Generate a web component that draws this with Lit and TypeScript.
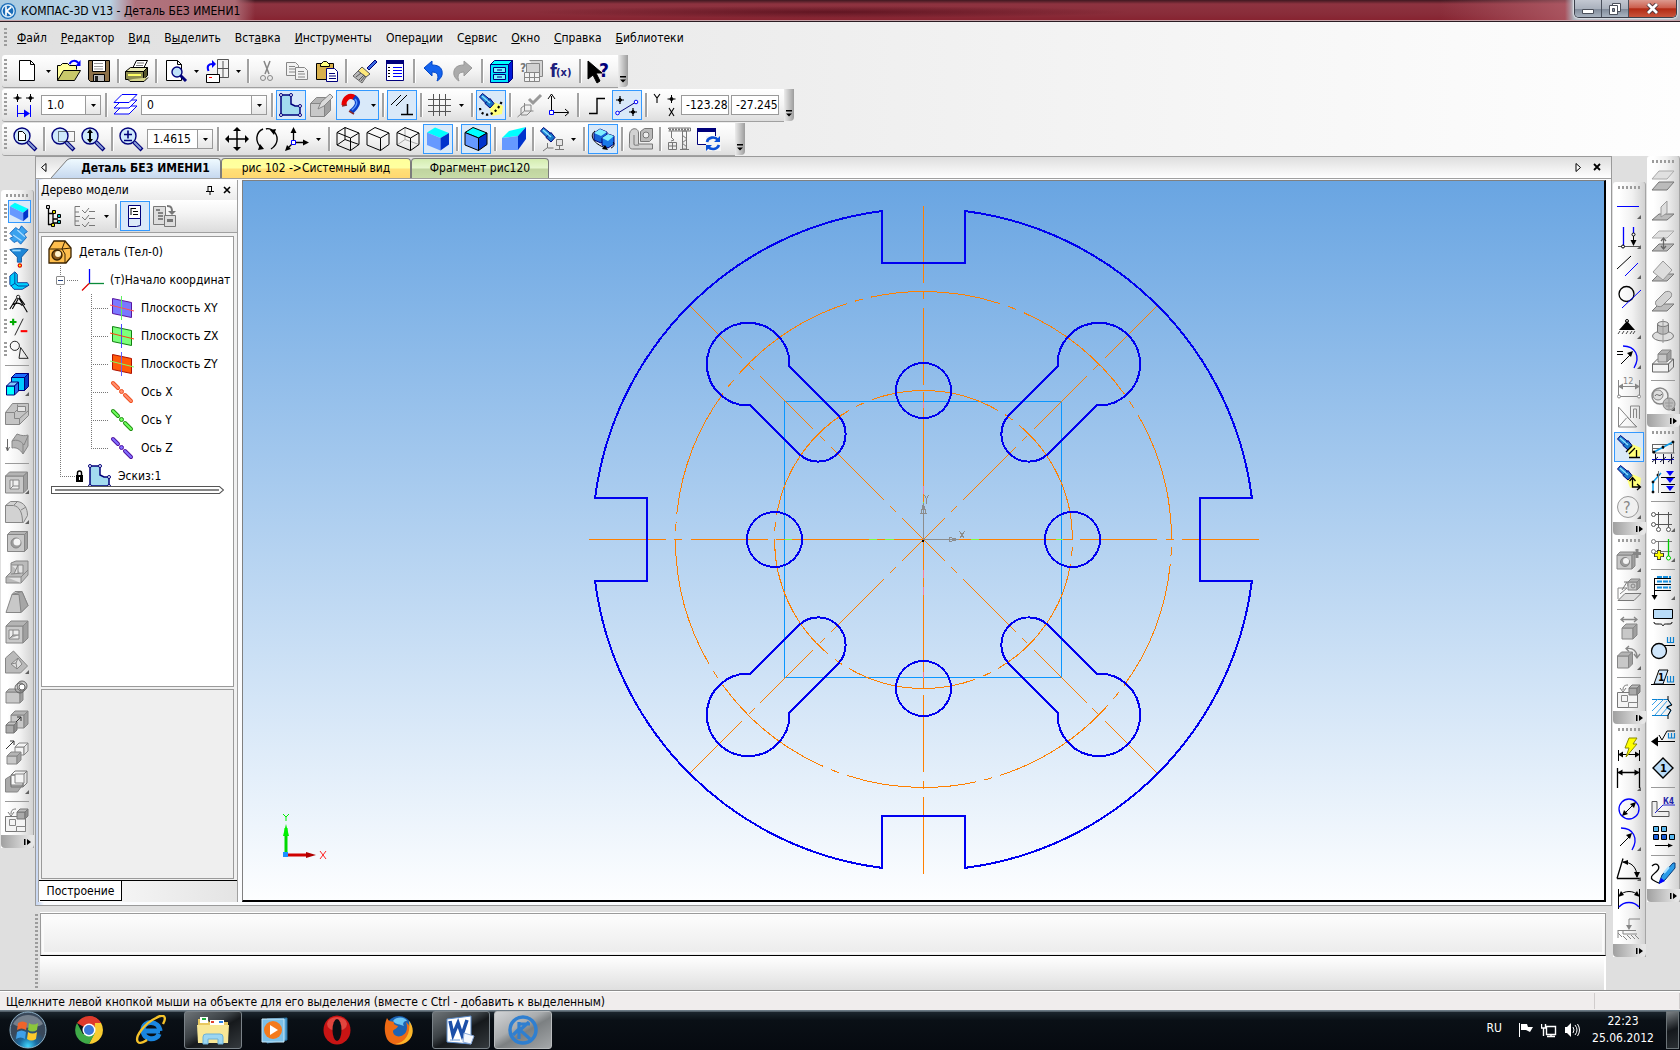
import { LitElement, html, css, svg, nothing } from "lit";
import { customElement } from "lit/decorators.js";
import { classMap } from "lit/directives/class-map.js";

/* ---------- drawing helpers ---------- */

const p = (d: string, stroke = "#000", fill = "none", w = 1) =>
  svg`<path d=${d} stroke=${stroke} fill=${fill} stroke-width=${w}></path>`;

const c = (x: number, y: number, r: number, stroke = "#000", fill = "none", w = 1) =>
  svg`<circle cx=${x} cy=${y} r=${r} stroke=${stroke} fill=${fill} stroke-width=${w}></circle>`;

const label = (x: number, y: number, s: string, color: string, size = 9, bold = false) =>
  svg`<text x=${x} y=${y} fill=${color} stroke="none" font-size=${size} font-weight=${bold ? 700 : 400}>${s}</text>`;

/** A box in oblique projection: front face w by h, depth d. */
const box = (x: number, y: number, w: number, h: number, d: number,
  front = "#c8c8c8", top = "#b4b4b4", side = "#a0a0a0", k = "#868686") => svg`
  ${p(`M${x} ${y + d}h${w}v${h}h${-w}z`, k, front)}
  ${p(`M${x} ${y + d}l${d} ${-d}h${w}l${-d} ${d}z`, k, top)}
  ${p(`M${x + w} ${y + d}l${d} ${-d}v${h}l${-d} ${d}z`, k, side)}`;

/** A cube turned towards the viewer, in a 24 px cell. */
const cubeOutline = (k = "#000") => p("M9 .5L23 6V17.500L14.500 23.500L1 18V5.500z", k);
const cubeFront = (k = "#000") => p("M1 5.500L14.500 11L23 6M14.500 11V23.500", k);
const cubeBack = (k = "#000") => p("M9 .5V12.500M1 18L9 12.500L23 17.500", k);
const cubeFaces = (k: string) => svg`
  ${p("M9 .5L23 6L14.500 11L1 5.500z", k, "#00ffff")}
  ${p("M1 5.500L14.500 11V23.500L1 18z", k, "#6699ff")}
  ${p("M23 6L14.500 11V23.500L23 17.500z", k, "#0033cc")}`;

const lens = (x = 9, y = 9) => svg`
  ${p(`M${x + 6} ${y + 6}l8 8`, "#00007b", "none", 4)}
  ${p(`M${x + 6} ${y + 6}l7 7`, "#8a9ed8", "none", 2)}
  ${c(x, y, 8, "#00007b", "#cfe9fb", 1.4)}`;

const torch = () => svg`
  ${p("M.5 4l3-3.500l8 6.500l-4 4z", "#00007b", "#1e8ad6")}
  ${p("M6 10.500l5-5l4 5l-4 4.500z", "#00007b", "#1677c8")}
  ${p("M3 3l8 7", "#8fe0ff", "none", 1.5)}`;
const beam = () => p("M10 14l5-5l9 4l-1 8l-10 2z", "none", "#ffff7a");

const cornerMark = () => p("M24 20v4h-4z", "none", "#606060");

const G = "#868686";
const L = "#d2d2d2";
const B = "#0000ff";
const N = "#00007b";

const icons: Record<string, unknown> = {
  /* file row */
  newFile: p("M4.500 1.500h11l4 4v16h-15z M15.500 1.500v4h4", "#000", "#fff"),
  open: svg`${p("M.5 21.500v-15h3l2-2h5l2 2h7v4", "#000", "#ffff9c")}
    ${p("M.5 21.500l6-10h17l-6 10z", "#000", "#c9c96a")}
    ${p("M12.500 5c2-4 6-4 9-1", B, "none", 2)}${p("M23.500 1v6h-5z", "none", B)}`,
  save: svg`${p("M1.500 1.500h21v21h-19l-2-2z", "#000", "#8c7048")}
    ${p("M5.500 1.500h13v11h-13z", "#000", "#fff")}${p("M7 4.500h9M7 7.500h9M7 10h9", "#999")}
    ${p("M6.500 15.500h11v7h-11z", "#000", "#c0c0c0")}${p("M8 17h3v5h-3z", "none", "#222")}`,
  print: svg`${p("M7.500 9.500l4-8h11l-4 8z", "#000", "#fff")}${p("M12 4h7M11 6.500h7", "#777")}
    ${p("M.5 12.500l5-4h17l-4 4z", "#000", "#e9e9b0")}${p("M.5 12.500h18v8h-18z", "#000", "#8d8d50")}
    ${p("M18.500 12.500l4-4v8l-4 4z", "#000", "#55552c")}${p("M3 20.500l2 2h14l4-4", "#000", "#d6d68e")}${p("M3 16h13", "#ffff66", "none", 2)}`,
  preview: svg`${p("M3.500 1.500h11l4 4v16h-15z M14.500 1.500v4h4", "#000", "#fff")}
    ${p("M17 16l6 6", N, "none", 3)}${c(14, 13, 5, N, "#bfe2f8", 1.4)}`,
  layout: svg`${p("M12.500.5h11v18h-11z", "#555", "#f4f4f4")}${p("M18 2v16M13 9.500h10", "#555", "none", 1)}
    ${p("M1.500 15.500h13v8h-13z", "#000", "#fff")}${p("M4 18.500h3", "#f00")}
    ${p("M3.500 12c-2-5 0-7 4-7", B, "none", 2)}${p("M7 1l4 4l-4 4z", "none", B)}`,
  cut: svg`${p("M9 2l5 13M15 2l-5 13", G, "none", 1.5)}${c(8, 19, 2.5, G)}${c(15, 19, 2.500, G)}`,
  copy: svg`${p("M1.500 3.500h9l3 3v10h-12z", G, "#f2f2f2")}${p("M4 7.500h6M4 10h7M4 13h6", G)}
    ${p("M10.500 8.500h9l3 3v9h-12z", G, "#f2f2f2")}${p("M13 12.500h6M13 15h7M13 18h7", G)}`,
  paste: svg`${p("M1.500 4.500h17v16h-17z", "#000", "#d8b04c")}${p("M5.500 5.500l3-3h3l3 3v2h-9z", "#000", "#ffff80")}
    ${p("M11.500 9.500h8l3 3v10h-11z", "#00007b", "#fff")}${p("M14 14.500h6M14 17h7M14 19.500h7", N)}`,
  brush: svg`${p("M14 9l8-8l2 2l-8 8z", N, "#3a6ae0")}${p("M9 8l8 7l-4 3l-8-6z", "#555", "#ffe97a")}
    ${p("M5 12l8 6l-4 6l-9-7z", "#666", "#b8b8b8")}${p("M3 18l5-4M6 21l5-5M8 22l4-5", "#555")}`,
  properties: svg`${p("M3.500 1.500h17v20h-17z", N, "#fff")}${p("M3 1h18v4h-18z", "none", N)}
    ${p("M10 8.500h9M10 11.500h9M10 14.500h9M10 17.500h9", B)}${p("M5 8.500h2M5 11.500h2M5 14.500h2M5 17.500h2", "#000")}`,
  undo: p("M3 9l8-7v4c8 0 11 4 10 10c-1 3-3 5-5 6c2-5 1-9-5-9v4z", "#0046c8", "#1463ee"),
  redo: p("M21 9l-8-7v4c-8 0-11 4-10 10c1 3 3 5 5 6c-2-5-1-9 5-9v4z", "#999", "#ababab"),
  manager: svg`${box(1.5, 1.5, 18, 18, 4, "#00e6ff", "#00ffff", "#0018d8", "#00007b")}
    ${p("M4.500 8.500h12v5h-12zM4.500 15.500h12v5h-12z", N, "#6ff6ff")}${p("M8 11h5M8 18h5", N)}`,
  variables: svg`${p("M10.500 1.500h13v16h-3", G, "#d5d5d5")}${p("M7.500 4.500h13v10h-13z", G, L)}
    ${p("M5.500 13.500h15v9h-15zM5.500 18.500h15M10.500 14v8M15.500 14v8", G, "#f2f2f2")}
    ${label(1, 13, "?", "#777", 12, true)}`,
  fx: svg`${label(1, 18, "f", "#20207c", 18, true)}${label(7, 17, "(x)", "#20207c", 11, true)}`,
  help: svg`${p("M1 2v18l5-4l4 8l3-2l-4-8h6z", "#000", "#000")}${label(12, 18, "?", N, 19, true)}`,

  /* current state row */
  step: svg`${p("M4.500 1v8M.5 5h8M17.500 1v8M13 5h8", "#000")}${c(4.5, 5, 1.500, "#000", "#000")}${c(17.500, 5, 1.5, "#000", "#000")}
    ${p("M4.500 12v12M17.500 12v12M5 20.500h10", B)}${p("M17 20.500l-6-4v8z", "none", B)}`,
  layers: svg`${["M1 21l8-8h15l-8 8z", "M1 15l8-8h15l-8 8z", "M1 9.500l8-8h15l-8 8z"].map(d => p(d, B, "#fff"))}`,
  sketch: svg`${p("M2 2h10v9l4 2h5v9h-19z", N, "#a3dbef", 1.5)}${c(2, 2, 1.500, N, "#fff")}${c(12, 2, 1.5, N, "#fff")}${c(21, 13, 1.500, N, "#fff")}${c(2, 22, 1.5, N, "#fff")}${c(21, 22, 1.5, N, "#fff")}`,
  sketch3d: svg`${box(1.5, 4.500, 14, 13, 6)}${p("M9 16l3-7l9-8l3 3l-9 9z", G, "#dcdcdc")}`,
  magnet: svg`${p("M4 12C4 5 10 1 15 5", "#e80000", "none", 5)}${p("M14 4c6 4 4 9-3 15", "#0a3ec8", "none", 5)}
    ${p("M15 6c3 3 2 7-3 11", "#5f9bff", "none", 1.500)}${p("M2 13l5-1M9 18l5 3", "#8a2a2a", "none", 1.500)}`,
  parallel: svg`${p("M1 12l10-10M6 13l11-11", "#000")}${p("M11 21.500h12M17.500 11v10", "#000", "none", 1.5)}`,
  grid: p("M0 6.500h23M0 12.500h23M0 18.500h23M5.500 1v22M11.500 1v22M17.500 1v22", "#555"),
  snapLight: svg`${beam()}${torch()}<path d="M1 15c1 9 14 11 22-7" fill="none" stroke="#000" stroke-width="2.200" stroke-dasharray="2.200 2.600"></path>`,
  snapGray: svg`${p("M7.500 10v8M7.500 18h9M7.500 18l-7 6M4 15l4-3l6 0v6l-4 4h-6z", G)}${p("M12 6l4 4l8-8", "#999", "none", 3)}`,
  localAxes: svg`${p("M4.500 3v14M7 19.500h14", "#000")}${p("M1 6l3.5-5l3.500 5M18 16l4 3.500l-4 3.500", "#000")}${p("M2.500 17.500h4v4h-4z", B, "#fff")}`,
  ortho: p("M4 20.500h8v-15h8", "#000", "none", 1.400),
  points: svg`${p("M3 20L21 9", N)}${c(2.5, 20, 1.8, B, "#fff")}${c(21, 9, 1.800, B, "#fff")}
    ${p("M5 3v8M1 7h8M18 15v8M14 19h8", "#000", "none", 1.2)}${c(5, 7, 1.5, "#000", "#000")}${c(18, 19, 1.500, "#000", "#000")}`,
  coordinates: svg`${p("M1 1l3 4l3-4M4 5v5M16 15l5 8M21 15l-5 8", "#000", "none", 1.1)}${p("M18.500 2v8M14.500 6h8", "#000")}${c(18.5, 6, 1.5, "#000", "#000")}`,

  /* view row */
  zoomSheet: svg`${lens()}${p("M5.500 4.500h4l3 3v6h-7z", "#000", "#fff")}`,
  zoomWindow: svg`${lens()}<rect x="7.500" y="4.500" width="16" height="10" fill="none" stroke="#000" stroke-dasharray="1 1"></rect>`,
  zoomDrag: svg`${lens()}${p("M9 4v10", "#000", "none", 2)}${p("M6 6l3-4l3 4zM6 12l3 4l3-4z", "none", "#000")}`,
  zoomScale: svg`${lens()}${p("M5 7.500h8M9 3.500v8M5 13.500h8", N, "none", 1.6)}`,
  pan: svg`${p("M12 3v18M3 12h18", "#000", "none", 1.500)}${p("M12 0l4 4h-8zM12 24l4-4h-8zM0 12l4-4v8zM24 12l-4-4v8z", "none", "#000")}`,
  orbit: svg`${p("M7 21C-1 15 1 5 8 2M17 3c7 5 7 14-1 19M11 2c2-1 4 0 6 1", "#000", "none", 1.4)}${p("M5 17l4 5l-6 1zM19 8l-4-5l6-1z", "none", "#000")}`,
  orient: svg`${p("M8.500 5v10M9 15.500h10M8 16l-6 6", "#000", "none", 1.300)}${p("M8.500 0l3 6h-6zM24 15.500l-6-3v6zM0 24l2-6l4 4z", "none", "#000")}${p("M6.500 13.500h4v4h-4z", B, "#fff")}`,
  wire: svg`${cubeBack()}${cubeOutline()}${cubeFront()}`,
  hidden: svg`${cubeOutline()}${cubeFront()}`,
  thinHidden: svg`${cubeBack("#a8a8a8")}${cubeOutline()}${cubeFront()}`,
  shaded: cubeFaces("none"),
  shadedEdges: cubeFaces("#000"),
  perspective: svg`${p("M0 11l7-7l17-4l-8 9z", "none", "#00ffff")}${p("M0 11l16-2v14h-16z", "none", "#6699ff")}${p("M16 9l8-9v12l-8 11z", "none", "#0033cc")}`,
  section: svg`${torch()}${p("M7.500 16v5h6M7 21l-4 3", "#777")}${p("M16.500 12.500h6v6h-6zM19.500 18v4M15 22.500h9", "#777", "#e4e4e4")}`,
  rotateModel: svg`${p("M3 6l6-4l7 3v7l-6 4l-7-3z", N, "#1464d8")}${p("M3 6l7 3l6-4l-7-3z", "none", "#7fefff")}
    ${p("M11 11l6-4l6 2v8l-6 4l-6-3z", N, "#1878e8")}${p("M11 11l6 3l6-5l-6-2z", "none", "#7fefff")}
    ${p("M4 4c-6 4-2 13 11 17M20 21c3-1 4-4 2-6", "#000")}${p("M17 23l-6-1l3-4z", "none", "#000")}`,
  simplify: svg`${p("M.5 8c0-8 9-8 9-2v11h14v5h-20c-4 0-3-4-3-6z", "#777", L)}${p("M5 8v9c0 2 2 1 5 1", "#777")}
    ${p("M11.500 4.500l4-3h8v10l-3 3h-9z", "#777", "#bbb")}${c(17, 8, 3, "#777", "#eee")}`,
  crane: svg`${p("M1.500 2v-1h22v3h-22M4.500 4v6M4 10l3 3l-3 1", "#777")}${p("M15.500 4h4v18h-4zM15 8l5 4l-5 4l5 4M13 22.500h9", "#777")}${p("M1.500 15.500h8v7h-8zM5.500 15v8M2 19h8", "#777", "#eee")}
    <path d="M2 2.500h20" stroke="#777" stroke-width="2" stroke-dasharray="2 1"></path>`,
  refresh: svg`${p("M.5 1.500h18v16h-18z", N, "#fff")}${p("M0 1h19v4h-19z", "none", N)}${p("M9 9h15v15h-15z", "none", "#f4f4f4")}
    ${p("M10 15c1-5 8-6 11-2M22 18c-2 5-8 5-11 2", "#0a4fd8", "none", 2.600)}${p("M23 9v6h-6zM9 24v-6h6z", "none", "#0a4fd8")}`,

  /* model tree */
  treeStruct: svg`${p("M5.500 4v17M5 9.500h6M5 20.500h6M10 10v5h5M10 15v4h5", "#000", "none", 1.3)}
    ${p("M3.500 1.500h3v3h-3z", "#000", "#ccc")}${p("M9.500 6.500h3v3h-3zM8.500 19.500h3v3h-3z", "#000", "#dd0")}${p("M14.500 10.500h3v3h-3zM14.500 16.500h3v3h-3z", "#000", "#0bb")}`,
  treeList: svg`${p("M7 2.500h-5v19h5M2 12.500h5M2 8h4M2 17h4", "#777")}${p("M9 6l3 3l4-5M9 13l3 3l4-5M9 20l3 3l4-5", "#777")}${p("M16 7.500h6M16 14.500h6M16 21.500h6", "#777")}`,
  treeSplit: svg`${p("M5.500 1.500h12v13h-12z", N, "#fff")}${p("M5.500 14.500h12v7l-4 1h-8z", N, "#dceaf8")}${p("M8 4.500h5M10 7.500h5M10 10.500h5M8 4v7", "#000")}`,
  treeRel: svg`${p("M.5 2.500h12v18h-12z", "#777", "#ddd")}${p("M3 6h4M5 9h5M5 12h5M5 15h5", "#666", "none", 1.500)}${p("M11.500 11.500h11v11h-11z", "#777", "#ddd")}${p("M14 15h6v3h-6z", "none", "#777")}${p("M14 2c5 0 5 3 5 6", "#777", "none", 2)}${p("M15 7h8l-4 4z", "none", "#777")}`,
  part: svg`${p("M1 9l5-8h11l6 7v9l-5 6h-17z", "#3a2200", "#ffbe4d", 1.3)}${p("M1 9h13l3 5v9", "#3a2200")}${p("M14 9l9-1M14 9l3-8", "#3a2200")}
    ${c(9, 15, 5, "#3a2200", "#8a5a1e", 1.3)}${c(10, 14, 3, "none", "#fff2cc")}`,
  csys: svg`${p("M8.500 1v14", B, "none", 1.300)}${p("M8 15.500h15", "#0a8a3a", "none", 1.3)}${p("M8 15.500l-7 7", "#e00000", "none", 1.3)}`,

  /* left compact panel */
  solid: svg`${p("M1 5l6-4l16 7l-6 5z", "none", "#00ffff")}${p("M1 5l16 8v10l-16-8z", "none", "#6699ff")}${p("M17 13l6-5v10l-6 5z", "none", "#0033cc")}`,
  surface: svg`${p("M1 10l7-7l4 3l3-5l7 7l-4 3l3 4l-7 8l-4-4l-4 2l-5-5l4-2z", "#0a5db8", "#3aa2ee")}${p("M5 12l10 7M10 6l9 8", "#a8dcff", "none", 1.500)}`,
  filter: svg`${p("M1 2c6-2 16-2 22 0l-8 9v6l-5 0v-6z", "#0a4f98", "#1d86d6")}${p("M4 3h10", "#9fdcff", "none", 2)}${c(13, 21, 2, "#e00000", "#ff0", 1.4)}`,
  sheet: svg`${p("M1 6l6-5l3 3v10l12 0l2 3l-8 5h-10l-5-6z", "#002a8a", "#00cfff")}${p("M7 2v13l4 3h11M7 15l-5 3", "#002a8a")}`,
  compass: svg`${c(11, 3.500, 2, "#000")}${p("M9 5l-8 13M12 5l10 17M11 6l-7 12M13 5l6 8M4 13c5-3 9-3 12 1", "#000", "none", 1.300)}`,
  plusMinus: svg`${p("M1 6h8M5 2v8", "#0a0", "none", 2.500)}${p("M17 2l-10 20", "#000")}${p("M14 17h8", "#f00", "none", 2.500)}`,
  shapes: svg`${c(7, 7, 5.500, "#000")}${p("M14 9l9 13h-11z", "#000")}`,
  extrude: svg`${box(6.5, 1.500, 13, 13, 4, "#00c8ff", "#1a6dff", "#0038c8", "#00007b")}${box(1.500, 10, 8, 9, 4, "#00ffff", "#7dc7ff", "#2a6df0", "#00007b")}${cornerMark()}`,
  gExtrude: svg`${p("M.5 22.500v-12l7-9h16v12l-9 9z", G, "#c4c4c4")}${p("M.5 10.500h9v6h5l9-8M9.500 10.500l3-3v-5M14.500 22.500v-6", G, "none")}${p("M12.500 4.500h8v5h-8z", G, "#e4e4e4")}`,
  gRotate: svg`${p("M2.500 7v11M1 15l1.500 4l2-4", "#666")}${p("M7 9l5-7c5 2 8 2 11 1v11l-5 8c-3-5-7-7-11-6z", G, "#b4b4b4")}${p("M7 9c5-2 9 0 12 4l4-9M18 12v9", G)}`,
  gShell: svg`${box(.5, 2, 18, 17, 4)}${p("M5 10h9v9h-9z", G, "#f0f0f0")}${p("M5 19l3-3h6M8 16v-6", G)}${cornerMark()}`,
  gFillet: svg`${p("M.5 22.500v-17l5-4h7c7 1 10 7 10 14l-4 7z", G, L)}${p("M.5 5.500h8c6 1 9 7 9 17M9 5l4-4M16 10l5-3", G)}${cornerMark()}`,
  gHole: svg`${box(2.500, 1.500, 17, 17, 3)}${c(11, 13, 5, G, "#9c9c9c")}${c(12, 12, 3.500, "none", "#f4f4f4")}`,
  gRib: svg`${p("M1 23v-6l5-5v-9l5-2h12v14l-7 8z", G, "#bbb")}${p("M6 5h12v10M1 17h15v6M16 17l7-7M6 14l12-1M9 14l4-9v9", G, "#e2e2e2")}`,
  gDraft: svg`${p("M1 22.500l6-18l3-3h7l6 14l-7 7z", G, "#c8c8c8")}${p("M7 4.500h7l2 18l7-7l-6-14z", G, "#a6a6a6")}`,
  gBox: svg`${box(1, 1, 17, 17, 5)}${p("M4 10h10v9h-10z", G, "#eee")}${p("M4 19l4-4h6M8 10v5", G, "#aaa")}`,
  gCutPlane: svg`${p("M.5 8l8-7l14 15l-7 7h-15z", G, "#bababa")}${p("M6 14l7-6l4 6l-5 5zM6 14l5-1l1 6M11 13l2-5", G, "#e0e0e0")}${cornerMark()}`,
  gPatch: svg`${box(1, 9, 14, 11, 3)}${c(17, 6, 5, "#666", "#ccc")}${c(15, 8, 5, "#666", "none")}${c(17, 7, 3, "#666", "#fff")}`,
  gMirror: svg`${box(6, 1, 13, 13, 4)}${box(1, 12, 8, 8, 3, "#aaa", "#c4c4c4", "#8f8f8f", "#777")}${p("M11 12l5-5M12 7h4v4", "#333")}`,
  gMove: svg`${p("M1 9l8-8M5 1h4v4", "#333")}${box(10, 3, 9, 8, 4, "#f4f4f4", "#f4f4f4", "#e6e6e6")}${box(2, 12, 10, 8, 4)}`,
  gArray: svg`${p("M.5 9l5-3v9h12l-5 7h-12z", G, "#aaa")}${box(6, 1, 12, 12, 4, "none", "none", "none", "#777")}${p("M10 4h9v9h-9z", G, "#f4f4f4")}${cornerMark()}`,
  gSheet: svg`${p("M.5 8.500h20v15h-20z", "#777", "#f4f4f4")}${p("M4.500 11.500h6v6h-6zM11.500 18.500h9v5h-9z", G)}${p("M11 1c-4 0-5 2-5 5M3 4l3 4l3-4", "#777")}${box(12, 1, 8, 7, 3, "#aaa", "#bbb", "#8f8f8f", "#777")}`,

  /* parametrization column */
  hLine: svg`${p("M0 11.500h22", B)}${cornerMark()}`,
  vPair: svg`${p("M6.500 2v20M16.500 2v8", B, "none", 1.300)}${p("M1 21.500h22", "#555")}${c(6, 21.500, 1.5, "#000", "#fff")}${c(16.500, 9.500, 1.5, "#000", "#fff")}${p("M16.500 11v8", "#000")}${p("M16.500 21l-3-6h6z", "none", "#000")}${cornerMark()}`,
  twoLines: svg`${p("M0 14l14-13", "#000")}${p("M8 21l13-13", B)}${cornerMark()}`,
  tangent: svg`${c(9.5, 9, 7.500, "#000", "none", 1.300)}${p("M5 23l19-18", B)}`,
  fixed: svg`${c(10, 6, 1.500)}${p("M10 6l8 9h-16z", "none", "#000")}${p("M3 16l-2 3M7 16l-2 3M11 16l-2 3M15 16l-2 3M18 16l-2 3", "#444")}${cornerMark()}`,
  equalR: svg`${p("M0 6.500h6M0 9.500h6", "#000")}${p("M6 1c12 0 18 10 11 22", B, "none", 1.300)}${p("M4 19l10-10", "#000")}${p("M16 6l-2 6l-4-4z", "none", "#000")}${cornerMark()}`,
  dim12: svg`${label(6, 9, "12", G, 9)}${p("M1.500 5v16M22.500 5v16M2 11.500h20M3 21.500h18", G)}${p("M1 11.500l5-3v6zM23 11.500l-5-3v6z", "none", G)}${c(2, 21.500, 1.5, G, "#fff")}${c(22, 21.500, 1.5, G, "#fff")}`,
  mirrorG: svg`${p("M1.500 2v20h18zM1.500 22l8-9M10 12l10 10", G)}${p("M13.500 13v-12h9v13M16.500 13v-9h3v9", G)}`,
  lightPar: svg`${beam()}${torch()}${p("M9 17l6-6M12 19l6-6M12 22.500h11M19.500 15v7", "#000", "none", 1.300)}`,
  lightAxes: svg`${beam()}${torch()}${p("M15.500 13v9h7M12.500 16l3-3.500l3 3.500M20 19l3.500 3l-3.500 3", "#000", "none", 1.300)}`,
  askG: svg`${c(11, 12, 10.500, "#999", "#f0f0f0")}${label(6, 18, "?", "#888", 16)}${cornerMark()}`,
  gHolePlus: svg`${box(0, 4, 15, 14, 3)}${c(8, 14, 4.500, G, "#9c9c9c")}${c(9, 13, 3, "none", "#f4f4f4")}${p("M20 1v9M16 5.500h8", G, "none", 3)}${cornerMark()}`,
  gProject: svg`${p("M1 22.500l7-7h16l-7 7z", "#777", "#ddd")}${p("M1 21v-11h9l-7 6", G)}${p("M5 12l5-8M7 4h4v4", "#777")}${box(11, 1, 9, 8, 3)}${c(16, 8, 2, G)}`,
  gWidth: svg`${box(5, 8, 11, 11, 4)}${p("M4 3.500h16M7 1l-3 2.500l3 2.500M17 1l3 2.500l-3 2.500", G, "none", 1.300)}`,
  gTurn: svg`${box(.5, 6, 11, 12, 4)}${p("M10 2.500c6-1 10 3 10 8M12 0l-3 2.500l3 3M17 8l3 4l3-4", G, "none", 1.300)}${cornerMark()}`,

  /* dimensions column */
  autoDim: svg`${p("M1.500 13v11M22.500 13v11M2 17.500h20", "#000")}${p("M1 17.500l5-3v6zM23 17.500l-5-3v6z", "none", "#000")}${p("M12 1h8l-4 6h4l-11 13l3-9h-4z", "#8a8a00", "#ff0")}`,
  linDim: svg`${p("M.5 1v20M22.500 1v20M1 5.500h21", "#000", "none", 1.300)}${p("M.5 5.500l5-3v6zM22.500 5.500l-5-3v6z", "none", "#000")}${cornerMark()}`,
  diaDim: svg`${c(12, 12, 10, B, "none", 1.300)}${p("M6 18l12-12", "#000")}${p("M19 5l-2 6l-4-4zM5 19l2-6l4 4z", "none", "#000")}`,
  radDim: svg`${p("M4 1c12 0 18 10 11 22", B, "none", 1.300)}${p("M3 19l10-10", "#000")}${p("M15 6l-2 6l-4-4z", "none", "#000")}${cornerMark()}`,
  angDim: svg`${p("M0 21.500h23M0 21.500l6-20", "#000", "none", 1.300)}${p("M6 5c8 0 14 5 14 15", "#000")}${p("M5 5l6-2v5zM20 21l-3-6h6z", "none", "#000")}${cornerMark()}`,
  arcDim: svg`${p("M1.500 2v20M22.500 2v20", "#000")}${p("M2 9c5-6 15-6 20 0", "#000")}${p("M1 10l3-6l3 4zM23 10l-3-6l-3 4z", "none", "#000")}${p("M2 20c5-6 15-6 20 0", B, "none", 1.300)}`,
  baseG: svg`${p("M1 13.500h18M1 13v8M6 13v4h14M12 10v-8h11M1 16l4 4M6 19l4 4M10 18l4 4M14 18l4 4M18 18l4 4", G)}${p("M12 13l-3-5h6z", "none", G)}`,

  /* auxiliary geometry column */
  planeOffset: svg`${p("M1 10l7-8h15l-7 8z", "#aaa", "#e0e0e0")}${p("M1 21l7-8h15l-7 8z", "#777", "#bbb")}`,
  planeAxis: svg`${p("M1 21l7-6h15l-7 6z", "#777", "#bbb")}${p("M10 18v-10l6-6v12z", "#999", "#ddd")}`,
  planeMove: svg`${p("M1 9l7-7h15l-7 7z", "#aaa", "#e0e0e0")}${p("M1 22l7-7h15l-7 7z", "#777", "#bbb")}${p("M12.500 9v10M10 12l2.500-3l2.500 3M10 17l2.500 3l2.500-3", "#666", "none", 1.300)}`,
  planeTilt: svg`${p("M1 22l7-7h15l-7 7z", "#777", "#bbb")}${p("M2 13l10-11l9 9l-9 10z", "#999", "#ddd")}`,
  planeCyl: svg`${p("M1 22l7-7h15l-7 7z", "#777", "#bbb")}${p("M5 12l9-9c5-2 8 1 6 5l-9 9c-4 2-8-1-6-5z", "#888", L)}`,
  planeRound: svg`<ellipse cx="12" cy="17" rx="10.500" ry="5" fill="#ddd" stroke="#777"></ellipse><path d="M6.500 5v8c2 3 9 3 11 0v-8" fill="#bbb" stroke="#777"></path><ellipse cx="12" cy="5" rx="5.500" ry="2.500" fill="#ddd" stroke="#777"></ellipse>${p("M12 0v24", "#999")}`,
  planeBox: svg`${box(1.500, 10, 16, 8, 5, "#f4f4f4", "#eee", "#ddd", "#666")}${box(7, 1, 9, 8, 4)}`,
  spheres: svg`${c(9, 9, 8, G, "#eee", 1.400)}${c(7, 8, 5, G, "#ddd")}${p("M4 9c2-4 4 2 7-2", "#666")}${c(18, 17, 6, G, "#bbb")}${p("M14 16h8M15 19h6M18 12v10", "#999")}${cornerMark()}`,
  gauge1: svg`${p("M1.500 4v9h22M1 4.500h20M1 8.500h12M22.500 2v11", "#666")}${p("M3 12L22 2", "#0a9ae8", "none", 1.500)}${c(3, 12, 1, "#000", "#000")}${c(12, 7, 1, "#000", "#000")}${c(22, 2, 1, "#000", "#000")}${p("M1 19.500h22", "#00c")}${p("M1 22l6-5M9 22l6-5M17 22l6-5M4.500 14v10M12.500 14v10M20.500 14v10", "#113", "none", 1)}`,
  gauge2: svg`${p("M2 22v-10l8-9", "#0a9ae8", "none", 1.500)}${c(2, 22, 1, "#000", "#000")}${c(2, 12, 1, "#000", "#000")}${c(7, 5, 1, "#000", "#000")}${p("M7.500 1v22", "#777")}${[1, 8, 16].map(y => svg`${p(`M15 ${y}h8l-4 5z`, "none", B)}${p(`M10 ${y + 6.5}h14`, "#000")}`)}`,
  bolts: svg`${p("M7.500 4v16M17.500 4v16M4 6.500h17M4 16.500h17", "#555")}${c(2.500, 6.500, 2, "#555", "#fff")}${c(2.500, 16.500, 2, "#555", "#fff")}${c(7.500, 21.500, 2, "#555", "#fff")}${c(17.500, 21.500, 2, "#555", "#fff")}${cornerMark()}`,
  boltsAdd: svg`${p("M7.500 3v16M4 3.500h17M4 13.500h17", "#777")}${p("M17.500 1v17", "#0c0", "none", 1.300)}${c(2.500, 3.500, 2, "#777", "#fff")}${c(2.500, 13.500, 2, "#777", "#fff")}${c(17.500, 20, 2, "#0c0", "#fff")}${p("M8 12v10M3 17h10", "#333", "none", 4)}${p("M8 13v8M4 17h8", "#ff0", "none", 2.500)}${cornerMark()}`,
  leaderText: svg`${p("M3.500 2v18M3 2.500h17M3 8.500h17M3 14.500h17", "#000")}${p("M3.500 24l-3-5h6z", "none", "#000")}
    <path d="M6 1h14M6 5.500h14M6 11.500h14" fill="none" stroke="#1390e0" stroke-width="2" stroke-dasharray="5 1"></path>${cornerMark()}`,
  brace: svg`${p("M2.500 3.500h19v9h-19z", "#000", "#b9dcf8")}${p("M3 16c0 2 1 2 4 2c4 0 4 0 5 2c1-2 1-2 5-2c3 0 4 0 4-2", "#000")}`,
  balloon: svg`${c(8, 15, 7.500, "#000", "#cfe6fb", 1.300)}${p("M13 9.500h11", "#000")}${p("M16.500 1v5.500h3M19.500 1v5.500h3v-5.500", "#0a80d0", "none", 1.200)}`,
  brand: svg`${p("M3 18l5-14h9l-5 14z", "#000", "#cfe6fb")}${label(7, 15, "1", "#000", 10, true)}${p("M0 18.500h24", "#000")}${p("M16.500 10v6h3M19.500 10v6h3v-6", "#0a80d0", "none", 1.200)}`,
  breakLine: svg`${p("M1 3.500h16l3 5l-5 3l5 3l-3 5h-16", "#0a80d0")}${p("M1 9l6-6M1 15l12-12M4 19l12-14M10 19l7-8", "#3aa0e8")}${p("M17 0v4l4 5l-5 2l4 3l-3 5v4", "#000")}`,
  rough: svg`${p("M6 15.500h18M8 9l3 5l5-9h8", "#000")}${p("M0 15.500l7-5v10z", "none", "#000")}${p("M17.500 7v5h3M20.500 7v5h3v-5", "#0a80d0", "none", 1.200)}`,
  datum: svg`${p("M12 2l10 10l-10 10l-10-10z", "#000", "#b9dcf8", 1.400)}${label(9, 16, "1", "#000", 11, true)}`,
  k4: svg`${p("M1 7.500h5v8c0 2 1 2 3 2h9v5h-17z", "#555", "#eee")}${p("M4 19l8-8h12", "#22c")}${label(12, 10, "К4", "#22a", 8, true)}`,
  squares: svg`${p("M2.500 2.500h5v5h-5zM10.500 2.500h5v5h-5z", "#000", "#58b8f0")}${p("M2.500 10.500h5v5h-5zM10.500 10.500h5v5h-5z", "#000", "#1a5cd8")}${p("M18.500 10.500h5v5h-5z", "#000", "#58b8f0")}${p("M4 21.500h16", "#000")}${p("M22 21.500l-5-2v4z", "none", "#000")}`,
  pencil: svg`${p("M1 4c5-5 9 1 5 5c-4 4-8 6-4 9c3 2 5 3 7 3", "#000", "none", 1.300)}${p("M8 21l3-8l11-12h2v5l-10 12z", "#053a7a", "#2a9be8")}${p("M8 22l2-6l4 3z", "none", "#00f")}${p("M13 11l5-6", "#a8e0ff", "none", 2)}`,
};

const glyph = (name: string, size = 24) =>
  html`<svg class="glyph" width=${size} height=${size} viewBox="0 0 24 24" aria-hidden="true">${icons[name]}</svg>`;

const caret = html`<svg class="caret" width="5" height="3" viewBox="0 0 5 3" aria-hidden="true"><path d="M0 0h5l-2.500 3z"></path></svg>`;
const overflowH = html`<button class="overflow" aria-label="Параметры панели"><svg width="6" height="8" viewBox="0 0 6 8"><path d="M0 0h6v1.500h-6zM0 3.500h6l-3 3z"></path></svg></button>`;
const overflowV = html`<button class="overflow-v" aria-label="Параметры панели"><svg width="7" height="6" viewBox="0 0 7 6"><path d="M0 0h1.500v6h-1.500zM3 0l4 3l-4 3z"></path></svg></button>`;

/* ---------- the part outline ---------- */

const cos45 = Math.SQRT1_2;
const R = 331;
const SLOT = 41.3;
const EDGE = Math.sqrt(R * R - SLOT * SLOT);
const DEPTH = 276.5;

const outline = (() => {
  const a = EDGE, s = SLOT, d = DEPTH;
  const arc = (x: number, y: number) => `A${R} ${R} 0 0 1 ${x} ${y}`;
  return `M${s} ${-a}${arc(a, -s)}H${d}V${s}H${a}${arc(s, a)}V${d}H${-s}V${a}${arc(-a, s)}H${-d}V${-s}H${-a}${arc(-s, -a)}V${-d}H${s}Z`;
})();

const keyhole = "M217.200 -27.500L149 -27.500A27.500 27.500 0 0 0 149 27.500L217.200 27.500A41.300 41.300 0 1 0 217.200 -27.500Z";
const HALF = R * cos45;

const drawing = html`
  <svg class="drawing" viewBox="243 181 1361 719" preserveAspectRatio="xMidYMid meet" role="img" aria-label="Эскиз детали">
    <g transform="translate(923.5 539.5)" fill="none" shape-rendering="crispEdges">
      <g stroke="#0a96ff"><path d="M-139 -138H138V138H-139Z"></path></g>
      <g stroke="#ff8000" stroke-width="1">
        <circle r="248" stroke-dasharray="0 8 9 8 130.800 0"></circle>
        <circle r="149" stroke-dasharray="0 8 9 8 131 0"></circle>
        ${[[-1, -1], [1, -1], [-1, 1], [1, 1]].map(([x, y]) => svg`<path stroke-dasharray="75 9 8 8" d=${`M${x * HALF} ${y * HALF}L0 0`}></path>`)}
        <path stroke-dasharray="77 8 8 9 77 9 8 9" d="M0 -334V-140M0 334V140M-335 0H-140M335 0H140"></path>
        <path d="M0 -148V148M-148 0H148"></path>
      </g>
      <path stroke="#80ff40" d="M-139 0h7M-55 0h8M-39 0h9M47 0h8M132 0h7M0 -38v3"></path>
      <path stroke="#ff8090" d="M0 -138v6M0 -54v8M0 30v8M0 47v8M0 132v6"></path>
      <g stroke="#0000f0" stroke-width="2">
        <path d=${outline}></path>
        ${[45, 135, 225, 315].map(a => svg`<path d=${keyhole} transform=${`rotate(${a})`}></path>`)}
        ${[[149, 0], [-149, 0], [0, 149], [0, -149]].map(([x, y]) => svg`<circle cx=${x} cy=${y} r="27.500"></circle>`)}
      </g>
      <g stroke="#8c8c8c" fill="none">
        <path d="M0 0V-35M0 0H34M-2.500 -26l2.500 -10l2.500 10zM26 -2v4l9 -2z"></path>
        <path d="M1 -44l2 3l2 -3M3 -41v5M36 -8l5 7M41 -8l-5 7"></path>
      </g>
      <rect x="-2" y="0" width="2" height="2" fill="#000"></rect>
    </g>
    <g>
      <path d="M286 855V828" stroke="#00d800" stroke-width="3"></path><path d="M286 824l3 12h-6z" fill="#00f000"></path>
      <path d="M286 855H308" stroke="#d00000" stroke-width="3"></path><path d="M316 855l-10 -3v6z" fill="#b00000"></path>
      <rect x="283" y="852" width="5" height="5" fill="#1e90ff"></rect>
      <path d="M283 814l3 3l3 -3M286 817v4" stroke="#00f000" fill="none"></path>
      <path d="M320 851l6 8M326 851l-6 8" stroke="#ff2020" fill="none"></path>
    </g>
  </svg>`;

/* ---------- data ---------- */

const menus: [string, string, string][] = [
  ["", "Ф", "айл"], ["", "Р", "едактор"], ["", "В", "ид"], ["В", "ы", "делить"], ["Вст", "а", "вка"],
  ["", "И", "нструменты"], ["Опера", "ц", "ии"], ["С", "е", "рвис"], ["", "О", "кно"], ["", "С", "правка"], ["", "Б", "иблиотеки"],
];

/* "|" is a separator, "v" a drop-down arrow, "*" marks a pressed button. */
const fileRow = "newFile v open save | print | preview v layout v | cut copy paste | brush properties | undo redo | manager variables fx | help";
const stateRowB = "| *sketch sketch3d *magnet> | *parallel | grid v | *snapLight | snapGray localAxes | ortho *points | coordinates";
const viewRowA = "zoomSheet | zoomWindow zoomDrag | zoomScale";
const viewRowB = "| pan orbit orient v | wire hidden thinHidden *shaded | *shadedEdges | perspective | section v | *rotateModel | simplify | crane refresh";

const modes = "*solid surface filter sheet compass plusMinus shapes";
const leftTools = "| extrude gExtrude gRotate | gShell gFillet gHole gRib gDraft gBox gCutPlane gPatch gMirror gMove gArray | gSheet";
const colA = [
  "hLine vPair twoLines tangent fixed equalR dim12 mirrorG *lightPar lightAxes askG",
  "gHolePlus gProject | gWidth gTurn | gSheet",
  "autoDim linDim diaDim radDim angDim arcDim baseG",
];
const colB = [
  "planeOffset planeAxis planeMove planeTilt planeCyl planeRound planeBox | spheres",
  "gauge1 gauge2 | bolts boltsAdd | leaderText brace balloon brand breakLine rough datum | k4 squares | pencil",
];

const plane = (fill: string, edge: string, v: string, h: string) => html`
  <svg class="glyph" width="24" height="24" viewBox="0 0 24 24" aria-hidden="true">
    <path d="M2.500 2.500l19 4v15l-19-4z" fill=${fill} stroke=${edge}></path>
    <path d="M11.500 0v24" stroke=${v}></path><path d="M0 9l24 6" stroke=${h}></path></svg>`;
const axis = (fill: string, edge: string) => html`
  <svg class="glyph" width="24" height="24" viewBox="0 0 24 24" aria-hidden="true">
    <path d="M3 3l5 5M15 15l6 6" stroke=${edge} stroke-width="4" stroke-linecap="round"></path>
    <path d="M3 3l5 5M15 15l6 6" stroke=${fill} stroke-width="2" stroke-linecap="round"></path>
    <circle cx="11.500" cy="11.500" r="2" fill=${fill} stroke=${edge}></circle></svg>`;

const origin: [string, unknown][] = [
  ["Плоскость XY", plane("#7a78ff", "#5a14a0", "#60f060", "#ff5050")],
  ["Плоскость ZX", plane("#7cff7c", "#108010", "#4848ff", "#ff4010")],
  ["Плоскость ZY", plane("#ff5a0a", "#b01000", "#6060ff", "#80ff60")],
  ["Ось X", axis("#ff9070", "#f05020")],
  ["Ось Y", axis("#70ff60", "#209010")],
  ["Ось Z", axis("#8070ff", "#5010a0")],
];

@customElement("app-root")
export class AppRoot extends LitElement {
  static styles = css`
    :host {
      display: flex;
      flex-direction: column;
      min-height: 100vh;
      font: 12px/16px "DejaVu Sans Condensed", "DejaVu Sans", sans-serif;
      color: #000;
      background: #dfdfdf;
      overflow: hidden;
      cursor: default;
    }
    * { box-sizing: border-box; }
    button, input, select { font: inherit; color: inherit; margin: 0; }
    button { border: 0; padding: 0; background: none; }
    svg text { font-family: "DejaVu Sans Condensed", "DejaVu Sans", sans-serif; }
    .glyph { display: block; flex: none; overflow: visible; }

    /* title */
    .title {
      display: flex; align-items: flex-start; height: 22px; padding-right: 3px;
      background:
        radial-gradient(ellipse 300px 6px at 830px 12px, rgba(70, 5, 18, .6), transparent),
        linear-gradient(90deg, #a9cbe2 0, #bad3e4 110px, #b1747e 135px, #ab6973 235px, rgba(139, 44, 58, 0) 255px),
        linear-gradient(90deg, transparent calc(100% - 240px), rgba(190, 110, 120, .6) calc(100% - 115px), #aeb3bd calc(100% - 106px)),
        linear-gradient(#3f1820, #8e3340 4px, #892c39 14px, #86222f);
      border-bottom: 1px solid #2c1d24;
      box-shadow: inset 0 -1px #c9a4aa;
    }
    .title .name { display: flex; gap: 5px; align-items: center; flex: 1; height: 21px; font-weight: 400; font-size: 12px; margin: 0; }
    .winbtns { display: flex; border: 1px solid #3b3f4a; border-top: 0; border-radius: 0 0 5px 5px; overflow: hidden; box-shadow: 0 0 2px 1px #e6e9ee; }
    .winbtns button { height: 17px; width: 27px; display: grid; place-items: center; background: linear-gradient(#c3c8d2, #aab1bd 50%, #7f8998 52%, #a9b3c0); border-right: 1px solid #4a505c; }
    .winbtns .close { width: 47px; border: 0; background: linear-gradient(#dc9a8f, #cc5f4e 45%, #b22a14 52%, #c8543c); }

    /* menu and toolbars */
    .top { background: linear-gradient(90deg, #e0e0e0, #fefefe); }
    .menu { display: flex; align-items: center; height: 33px; gap: 14px; padding: 0 0 1px 4px; }
    .menu .grip { margin-right: -4px; }
    .menu u { text-underline-offset: 1px; }
    .bar { display: flex; height: 34px; width: max-content; margin-left: 2px; }
    .bar:last-child { height: 33px; }
    .bar-body {
      display: flex; align-items: center; padding: 0 4px 0 2px; height: 33px;
      background: linear-gradient(#fff, #f4f4f4 50%, #dedede);
      border-bottom: 1px solid #a0a0a0; border-radius: 3px 0 0 3px;
    }
    .grip { width: 3px; height: 20px; flex: none; background: repeating-linear-gradient(#9c9c9c 0 2px, transparent 2px 4px); }
    .bar .grip { margin-right: 5px; height: 24px; }
    .bar.loose .grip { margin-right: 3px; }
    .bar.loose .arrow { width: 13px; }
    .bar:last-child .bar-body { padding-right: 11px; }
    .tb { width: 30px; height: 30px; display: flex; align-items: center; justify-content: center; flex: none; }
    .tb.on { background: #d9e9f9; border: 1px solid #3399ff; }
    .tb.wide { width: 43px; gap: 7px; }
    .arrow { width: 12px; height: 30px; display: flex; align-items: center; justify-content: center; }
    .sep { width: 8px; height: 24px; display: flex; justify-content: center; flex: none; }
    .sep::before { content: ""; width: 2px; height: 24px; background: #a2a2a2; border-right: 1px solid #fff; }
    .overflow { width: 10px; height: 32px; display: flex; align-items: flex-end; justify-content: center; padding-bottom: 3px; background: linear-gradient(90deg, #ececec, #9c9c9c); border-radius: 0 0 4px 0; }
    .combo { display: flex; position: relative; height: 20px; border: 1px solid #9a9a9a; background: #fff; align-items: center; margin: 0 1px; }
    .combo select { appearance: none; border: 0; background: none; width: 100%; height: 18px; padding: 0 16px 0 5px; outline: none; }
    .combo .drop { position: absolute; right: 0; top: 0; bottom: 0; width: 15px; border-left: 1px solid #9a9a9a; background: linear-gradient(#fff, #e6e6e6); display: grid; place-items: center; pointer-events: none; }
    .w-step { width: 60px; } .w-layer { width: 126px; } .w-zoom { width: 66px; }
    .field { width: 48px; height: 20px; border: 1px solid #9a9a9a; background: #fff; padding: 0 0 0 4px; margin: 0 1px; outline: none; }

    /* work area */
    .work { display: flex; flex: 1; align-items: stretch; }
    .center { flex: 1; min-width: 0; display: flex; flex-direction: column; }
    .dock { width: 34px; display: flex; flex-direction: column; flex: none; padding-left: 1px; }
    .dock.left { padding-top: 34px; width: 35px; }
    .dock.right-a { padding-top: 26px; }
    .strip { width: 33px; background: linear-gradient(90deg, #fff 20%, #f1f1f1 60%, #d2d2d2); border-right: 1px solid #a5a5a5; display: flex; flex-direction: column; align-items: center; border-radius: 3px 3px 0 0; }
    .strip .grip-h { width: 23px; height: 10px; flex: none; background: repeating-linear-gradient(90deg, #9c9c9c 0 2px, transparent 2px 4px) 0 4px / 23px 3px no-repeat; }
    .strip .hsep { width: 24px; height: 8px; display: flex; align-items: center; flex: none; }
    .strip .hsep::before { content: ""; flex: 1; height: 1px; background: #9a9a9a; }
    .mode { display: flex; align-items: center; gap: 1px; width: 27px; height: 23px; }
    .mode .grip { height: 16px; }
    .mode .tb { width: 23px; height: 23px; }
    .overflow-v { width: 33px; height: 13px; display: flex; justify-content: flex-end; align-items: center; padding-right: 3px; flex: none; background: linear-gradient(90deg, #a0a0a0, #e6e6e6 90%); border-radius: 0 0 4px 4px; }

    .mdi { display: flex; flex-direction: column; flex: 1; border: 1px solid #9a9a9a; background: #fff; }
    .tabs { display: flex; align-items: flex-end; height: 22px; background: linear-gradient(#dedede, #fff); border-bottom: 1px solid #a0a0a0; }
    .tabs .scroll { width: 15px; height: 21px; padding-bottom: 1px; display: grid; place-items: center; }
    .slant { display: block; flex: none; }
    .tab { height: 20px; border: 1px solid #7c7c7c; border-bottom: 0; border-radius: 4px 4px 0 0; text-align: center; padding-bottom: 2px; }
    .tab.active { width: 150px; border-left: 0; border-radius: 0 4px 0 0; font-weight: 700; background: linear-gradient(#effaff, #c6d8ef); }
    .tab.second { width: 190px; background: linear-gradient(#ffff9a, #ffffa0 45%, #ffe078 55%, #ffd870); }
    .tab.third { width: 138px; background: linear-gradient(#d4ecb0, #e4f6cc 45%, #c0d4a0 55%, #c8dca8); }
    .tabs .fill { flex: 1; }
    .tabs .tail { display: flex; gap: 12px; padding: 0 10px 6px 0; }
    .tabs .tail button { height: 10px; display: grid; place-items: center; }
    .client { display: flex; flex: 1; padding: 1px 5px 3px 2px; background: linear-gradient(90deg, #cbd9f2 2px, #fbfcfe 8px); }

    .panel { width: 200px; display: flex; flex-direction: column; border-left: 1px solid #a0a0a0; border-right: 1px solid #a0a0a0; background: #f0f0f0; margin-right: 4px; flex: none; }
    .panel-head { display: flex; align-items: center; height: 20px; padding: 0 2px 0 2px; background: linear-gradient(#fff, #ececec); }
    .panel-head h2 { font: inherit; margin: 0; flex: 1; }
    .panel-head button { width: 17px; height: 16px; display: grid; place-items: center; }
    .panel-tools { display: flex; align-items: center; height: 33px; padding-left: 1px; background: linear-gradient(#fff, #f4f4f4 40%, #dcdcdc); border-bottom: 1px solid #a0a0a0; }
    .panel-body { display: flex; flex-direction: column; gap: 2px; flex: 1; padding: 3px 3px 1px 2px; border-bottom: 1px solid #000; }
    .tree { flex: 452 0 0; background: #fff; border: 1px solid #9a9a9a; padding: 1px 0 0; margin: 0; list-style: none; overflow: hidden; }
    .blank { flex: 190 0 0; border: 1px solid #9a9a9a; background: #efefef; }
    .tree ul { list-style: none; margin: 0; padding: 0; }
    .node { display: flex; align-items: center; height: 28px; white-space: nowrap; }
    .lvl0 { padding-left: 6px; gap: 7px; }
    .branch { background: repeating-linear-gradient(#777 0 1px, transparent 1px 2px) 18px 0 / 1px 100% no-repeat; }
    .lvl1 { padding-left: 14px; }
    .lvl1 .expander { width: 9px; height: 9px; border: 1px solid #8a8a8a; background: #fff; border-radius: 1px; display: grid; place-items: center; }
    .hdots { height: 1px; background: repeating-linear-gradient(90deg, #777 0 1px, transparent 1px 2px); }
    .d1 { width: 12px; margin: 0 2px 0 2px; }
    .d2 { width: 17px; margin-right: 2px; }
    .d3 { width: 16px; }
    .lvl1 .glyph { margin-right: 5px; }
    .lvl2 { padding-left: 49px; background: repeating-linear-gradient(#777 0 1px, transparent 1px 2px) 49px 0 / 1px 100% no-repeat; }
    .lvl2:last-child { background-size: 1px 14px; }
    .lvl2 .glyph { margin-right: 7px; }
    .sk { padding-left: 18px; background: repeating-linear-gradient(#777 0 1px, transparent 1px 2px) 18px 0 / 1px 14px no-repeat; }
    .sk .glyph { margin: 0 6px 0 5px; }
    .rollback { margin: -4px 9px 0; display: block; width: calc(100% - 18px); height: 8px; }
    .ptabs { height: 21px; display: flex; background: linear-gradient(90deg, #fff, #e4e4e4); padding-left: 1px; }
    .ptabs button { height: 20px; width: 82px; border: solid #000; border-width: 0 1px 1px 0; background: #fff; }

    .canvas { flex: 1; min-width: 0; contain: size; border: solid; border-width: 1px 2px 2px 1px; border-color: #808080 #000 #000 #808080; background: linear-gradient(#69a5e2, #fdfeff); display: flex; }
    .drawing { flex: 1; min-width: 0; min-height: 0; display: block; }

    .bottom { display: flex; margin-top: 6px; gap: 2px; height: 78px; flex: none; padding-right: 6px; }
    .bottom .grip { height: 74px; margin-top: 2px; }
    .bottom-col { flex: 1; display: flex; flex-direction: column; background: #fff; padding-top: 1px; }
    .prop { height: 43px; border: 1px solid #9a9a9a; border-bottom-color: #000; background: linear-gradient(#fdfdfd, #ebebeb); outline: 2px solid #fafafa; outline-offset: -4px; }
    .prop2 { flex: 1; background: linear-gradient(#fff, #dfdfdf); margin-right: 2px; }

    .status { display: flex; height: 20px; border-top: 1px solid #8d8d8d; background: #f0eded; align-items: center; box-shadow: inset 0 1px #fff; flex: none; }
    .status span { flex: 1; padding: 2px 0 0 6px; }
    .status i { width: 86px; height: 16px; border: solid #d0cccc; border-width: 0 1px; }

    /* task bar */
    .task { display: flex; height: 40px; align-items: center; background: linear-gradient(#4b5a66 0, #8b99a3 1px, #1b252d 2px, #0a1016 10px, #060a10); color: #fff; flex: none; padding-left: 4px; }
    .task .app { width: 62px; height: 38px; display: grid; place-items: center; }
    .task .start { width: 48px; margin-right: 6px; height: 40px; display: grid; place-items: center; }
    .task .run { width: 58px; margin: 0 2px; border: 1px solid #7a8288; border-radius: 3px; background: linear-gradient(150deg, #6e7478 0, #3c4246 40%, #16191c 55%, #34393d); }
    .task .cur { background: linear-gradient(150deg, #d2d4d6 0, #a9acae 40%, #7c8082 55%, #a4a7a9); border-color: #b9bcbe; }
    .tray { margin-left: auto; display: flex; align-items: center; height: 100%; gap: 7px; }
    .tray .lang { margin-right: 8px; padding-bottom: 4px; }
    .clock { width: 72px; text-align: center; line-height: 17px; }
    .desk { width: 13px; height: 38px; border: 1px solid #6c7478; background: linear-gradient(160deg, #7a8084, #14181c 50%, #2a2f33); margin-right: 1px; }
  `;

  private tool(token: string, small = false) {
    if (token === "|") return html`<span class="sep"></span>`;
    if (token === "v") return html`<button class="arrow" aria-label="Список">${caret}</button>`;
    const on = token.startsWith("*");
    const wide = token.endsWith(">");
    const name = token.replace(/[*>]/g, "");
    return html`<button class=${classMap({ tb: true, on, wide })} aria-label=${name} aria-pressed=${on ? "true" : nothing}>
      ${glyph(name, small ? 20 : 24)}${wide ? caret : nothing}</button>`;
  }

  private row(spec: string) {
    return spec.split(" ").map(t => this.tool(t));
  }

  private strip(spec: string, grip = true) {
    return html`${grip ? html`<span class="grip-h"></span>` : nothing}
      ${spec.split(" ").map(t => t === "|" ? html`<span class="hsep"></span>` : this.tool(t))}`;
  }

  private combo(name: string, cls: string, value: string) {
    return html`<label class="combo ${cls}"><select aria-label=${name}><option>${value}</option></select><span class="drop">${caret}</span></label>`;
  }

  private renderTitle() {
    return html`
      <header class="title">
        <h1 class="name">
          <svg width="16" height="16" viewBox="0 0 24 24" aria-hidden="true"><circle cx="12" cy="12" r="12" fill="#1a6cb8"></circle><circle cx="12" cy="12" r="9" fill="none" stroke="#d8ecfa" stroke-width="2"></circle><path d="M9 5v14M17 6l-7 6l7 6" stroke="#fff" stroke-width="2.500" fill="none"></path></svg>
          КОМПАС-3D V13 - Деталь БЕЗ ИМЕНИ1
        </h1>
        <div class="winbtns">
          <button aria-label="Свернуть"><svg width="12" height="12" viewBox="0 0 12 12"><path d="M.5 6.500h11v4h-11z" fill="#fff" stroke="#4a4f5a"></path></svg></button>
          <button aria-label="Восстановить"><svg width="12" height="12" viewBox="0 0 12 12"><path d="M3.500.5h8v8h-8z" fill="#fff" stroke="#4a4f5a"></path><path d="M.5 2.500h8v9h-8z" fill="#fff" stroke="#4a4f5a"></path><path d="M3.500 5.500h2v3h-2z" fill="#8a94a4" stroke="#4a4f5a"></path></svg></button>
          <button class="close" aria-label="Закрыть"><svg width="13" height="11" viewBox="0 0 13 11"><path d="M2 1l9 9M11 1l-9 9" stroke="#4a3038" stroke-width="4.500"></path><path d="M2 1l9 9M11 1l-9 9" stroke="#fff" stroke-width="2.800"></path></svg></button>
        </div>
      </header>`;
  }

  private renderTree() {
    return html`
      <ul class="tree" aria-label="Дерево модели">
        <li><div class="node lvl0">${glyph("part")}Деталь (Тел-0)</div>
          <ul>
            <li class="branch">
              <div class="node lvl1"><button class="expander" aria-label="Свернуть узел"><svg width="5" height="1"><path d="M0 .5h5" stroke="#204080"></path></svg></button>
                <span class="hdots d1"></span>${glyph("csys")}(т)Начало координат</div>
              <ul>${origin.map(([name, icon]) => html`<li class="node lvl2"><span class="hdots d2"></span>${icon}${name}</li>`)}</ul>
            </li>
            <li class="node sk"><span class="hdots d3"></span>
              <svg width="7" height="12" viewBox="0 0 7 12" aria-hidden="true"><path d="M1.500 5v-2a2 2 0 0 1 4 0v2" fill="none" stroke="#000" stroke-width="1.500"></path><path d="M0 5h7v7h-7z"></path><path d="M3 7h1v3h-1z" fill="#fff"></path></svg>
              ${glyph("sketch")}Эскиз:1</li>
          </ul>
        </li>
        <li><svg class="rollback" viewBox="0 0 172 8" preserveAspectRatio="none" aria-hidden="true"><path d="M.5 .5h167l4 3.500l-4 3.500h-167z" fill="#fff" stroke="#555"></path><path d="M4 4h163" stroke="#888" stroke-width="2"></path></svg></li>
      </ul>`;
  }

  private renderMdi() {
    return html`
      <section class="mdi">
        <nav class="tabs" aria-label="Документы">
          <button class="scroll" aria-label="Назад"><svg width="6" height="9" viewBox="0 0 6 9"><path d="M5 .5v8l-4.500-4z" fill="#fff" stroke="#000"></path></svg></button>
          <svg class="slant" width="20" height="20" viewBox="0 0 20 20" aria-hidden="true">
            <defs><linearGradient id="tg" x2="0" y2="1"><stop stop-color="#effaff"></stop><stop offset="1" stop-color="#c6d8ef"></stop></linearGradient></defs>
            <path d="M0 20L16 2Q18 .5 20 .5V20" fill="url(#tg)"></path><path d="M0 20L16 2Q18 .5 20 .5" fill="none" stroke="#7c7c7c"></path></svg>
          <button class="tab active">Деталь БЕЗ ИМЕНИ1</button>
          <button class="tab second">рис 102 -&gt;Системный вид</button>
          <button class="tab third">Фрагмент рис120</button>
          <span class="fill"></span>
          <span class="tail">
            <button aria-label="Вперёд"><svg width="6" height="9" viewBox="0 0 6 9"><path d="M1 .5v8l4.500-4z" fill="#fff" stroke="#000"></path></svg></button>
            <button aria-label="Закрыть документ"><svg width="8" height="8" viewBox="0 0 8 8"><path d="M1 1l6 6M7 1l-6 6" stroke="#000" stroke-width="1.800"></path></svg></button>
          </span>
        </nav>
        <div class="client">
          <aside class="panel">
            <div class="panel-head"><h2>Дерево модели</h2>
              <button aria-label="Закрепить"><svg width="8" height="9" viewBox="0 0 8 9"><path d="M2 0v5M5.500 0v5M0 5.500h8M4 6v3M2 .5h4" stroke="#000" fill="none"></path></svg></button>
              <button aria-label="Закрыть панель"><svg width="8" height="8" viewBox="0 0 8 8"><path d="M1 1l6 6M7 1l-6 6" stroke="#000" stroke-width="1.600"></path></svg></button>
            </div>
            <div class="panel-tools">${this.row("treeStruct treeList v | *treeSplit treeRel")}</div>
            <div class="panel-body">${this.renderTree()}<div class="blank"></div></div>
            <div class="ptabs"><button>Построение</button></div>
          </aside>
          <main class="canvas">${drawing}</main>
        </div>
      </section>`;
  }

  private renderTaskbar() {
    return html`
      <footer class="task">
        <button class="start" aria-label="Пуск"><svg width="38" height="38" viewBox="0 0 38 38">
          <defs><radialGradient id="orb" cy=".95"><stop stop-color="#3fd8ff"></stop><stop offset=".5" stop-color="#1a6aa0"></stop><stop offset="1" stop-color="#39485a"></stop></radialGradient></defs>
          <circle cx="19" cy="19" r="18" fill="url(#orb)" stroke="#8fb2c8"></circle><path d="M4 13c6-12 24-12 30 0c-8 5-22 5-30 0z" fill="#fff" opacity=".3"></path>
          <path d="M9 12c3-2 6-2 9 0l-1 7c-3-2-6-2-9 0z" fill="#f0642a"></path><path d="M20 12c3 2 6 2 9 0l-1 7c-3 2-6 2-9 0z" fill="#8cc63a"></path>
          <path d="M8 21c3-2 6-2 9 0l-1 7c-3-2-6-2-9 0z" fill="#3fa0e8"></path><path d="M19 21c3 2 6 2 9 0l-1 7c-3 2-6 2-9 0z" fill="#fbc92c"></path></svg></button>
        <button class="app" aria-label="Chrome"><svg width="28" height="28" viewBox="0 0 28 28"><path d="M14 14L2 7a14 14 0 0 1 24.200 0z" fill="#de3b2c"></path><path d="M14 0a14 14 0 0 1 12.100 7H14z" fill="#de3b2c"></path><path d="M26.100 7A14 14 0 0 1 14 28l5-10l1-11z" fill="#f8cc30"></path><path d="M2 7A14 14 0 0 0 14 28l6-11l-12 1z" fill="#3faa48"></path><circle cx="14" cy="14" r="6.500" fill="#fff"></circle><circle cx="14" cy="14" r="5" fill="#3a78d8"></circle></svg></button>
        <button class="app" aria-label="Internet Explorer"><svg width="32" height="30" viewBox="0 0 32 30"><path d="M8 16h17M24 19c-2 7-16 7-16-4c0-10 16-10 17 1" fill="none" stroke="#1a86e0" stroke-width="5"></path><path d="M28 9c4-7 1-11-7-6C10 8-1 22 3 27c2 2 6 0 9-2" fill="none" stroke="#f5c22a" stroke-width="2.400"></path></svg></button>
        <button class="app run" aria-label="Проводник"><svg width="32" height="30" viewBox="0 0 32 30"><path d="M1 4h9l2 3h19v20H1z" fill="#e8c860"></path><path d="M3 2h8v6h-8z" fill="#fff"></path><path d="M5 3h4v2h-4z" fill="#20b040"></path><path d="M13 5h14v5h-14z" fill="#fff"></path><path d="M14 6h3v2h-3z" fill="#e04030"></path><path d="M22 6h4v2h-4z" fill="#2a80e0"></path><path d="M0 10h32l-1 18H1z" fill="#f8e796"></path><path d="M6 29v-7q0-3 3-3h14q3 0 3 3v7h-5v-5h-10v5z" fill="#9bd6f2" stroke="#6ab0d8"></path></svg></button>
        <button class="app" aria-label="Проигрыватель"><svg width="28" height="28" viewBox="0 0 28 28"><path d="M6 3l20-1v22l-20 3z" fill="#4a9cd0" stroke="#2a70a0"></path><path d="M1 3h22v23H1z" fill="#7cc0e8" stroke="#c8e8f8"></path><circle cx="12" cy="14" r="9" fill="#f47a1c"></circle><path d="M9 9l8 5l-8 5z" fill="#fff"></path></svg></button>
        <button class="app" aria-label="Opera"><svg width="28" height="30" viewBox="0 0 28 30"><ellipse cx="14" cy="15" rx="13.500" ry="14.500" fill="#c81414"></ellipse><ellipse cx="14" cy="9" rx="10" ry="7" fill="#ec5a50" opacity=".7"></ellipse><ellipse cx="14" cy="15" rx="4.500" ry="11" fill="#0a0e14"></ellipse></svg></button>
        <button class="app" aria-label="Firefox"><svg width="32" height="30" viewBox="0 0 32 30"><circle cx="16" cy="14" r="13" fill="#1d63b4"></circle><path d="M10 6c4-5 12-4 14 0c-3 0-5 2-3 5c-4-2-8-1-11-5z" fill="#6cc4f4"></path><path d="M4 3c2 4 4 3 7 4c-1 3 2 3 4 4c-1 3-4 3-5 5c0 5 6 7 10 4c4-2 5-8 3-13c6 5 8 12 3 18c-6 7-18 6-22-1c-3-6-3-15 0-21z" fill="#ee6a14"></path><path d="M26 6c5 6 5 14 0 19c-4 4-9 5-14 4c10-1 16-10 14-23z" fill="#fbb62a"></path></svg></button>
        <button class="app run" aria-label="Word"><svg width="30" height="30" viewBox="0 0 30 30"><path d="M1 4l24-3v28l-24-2z" fill="#fff" stroke="#5a8ac8"></path><path d="M4 6l3 14l5-12l4 12l5-15" fill="none" stroke="#1c4fa8" stroke-width="3.500"></path><path d="M18 18l10 3l-3 8l-8-2z" fill="#f4f8fe" stroke="#88a8d8"></path><path d="M4 25h10" stroke="#6a98d8"></path></svg></button>
        <button class="app run cur" aria-label="КОМПАС"><svg width="30" height="30" viewBox="0 0 30 30"><circle cx="15" cy="15" r="13" fill="none" stroke="#2f7fd0" stroke-width="3.500"></circle><path d="M11 7v17M10 9h12M21 7l-9 8l10 9M5 20l7-7" stroke="#2f7fd0" stroke-width="3.200" fill="none"></path></svg></button>
        <div class="tray">
          <span class="lang">RU</span>
          <svg width="17" height="16" viewBox="0 0 17 16" aria-label="Центр поддержки"><path d="M2.500 1v14" stroke="#fff"></path><path d="M4 2h6l1 3h5l-3 5l-4-2h-5z" fill="#fff"></path></svg>
          <svg width="16" height="16" viewBox="0 0 16 16" aria-label="Сеть"><path d="M5.500 4.500h9v8h-9zM10 12v2M6 14.500h8M.5 2v4h4v-4M2.500 6v8" fill="none" stroke="#fff" stroke-width="1.400"></path></svg>
          <svg width="16" height="16" viewBox="0 0 16 16" aria-label="Громкость"><path d="M1 5h2l4-4v14l-4-4h-2z" fill="#fff"></path><path d="M9 5q2 3 0 6M11 3q4 5 0 10M13.500 2q4 6 0 12" fill="none" stroke="#fff"></path></svg>
          <time class="clock">22:23<br>25.06.2012</time>
          <button class="desk" aria-label="Показать рабочий стол"></button>
        </div>
      </footer>`;
  }

  render() {
    return html`
      ${this.renderTitle()}
      <div class="top">
        <nav class="menu"><span class="grip"></span>${menus.map(([a, u, b]) => html`<button>${a}<u>${u}</u>${b}</button>`)}</nav>
        <div class="bar"><div class="bar-body"><span class="grip"></span>${this.row(fileRow)}</div>${overflowH}</div>
        <div class="bar loose"><div class="bar-body"><span class="grip"></span>${this.tool("step")}${this.combo("Шаг курсора", "w-step", "1.0")}${this.tool("|")}${this.tool("layers")}${this.combo("Слой", "w-layer", "0")}${this.row(stateRowB)}
          <input class="field" aria-label="X" value="-123.280"><input class="field" aria-label="Y" value="-27.2451"></div>${overflowH}</div>
        <div class="bar loose"><div class="bar-body"><span class="grip"></span>${this.row(viewRowA)}${this.combo("Масштаб", "w-zoom", "1.4615")}${this.row(viewRowB)}</div>${overflowH}</div>
      </div>
      <div class="work">
        <div class="dock left"><div class="strip"><span class="grip-h"></span>
          ${modes.split(" ").map(t => html`<div class="mode"><span class="grip"></span>${this.tool(t, true)}</div>`)}
          ${this.strip(leftTools, false)}${overflowV}</div></div>
        <div class="center">
          ${this.renderMdi()}
          <section class="bottom" aria-label="Панель свойств"><span class="grip"></span><div class="bottom-col"><div class="prop"></div><div class="prop2"></div></div></section>
        </div>
        <div class="dock right-a"><div class="strip">${colA.map(s => html`${this.strip(s)}${overflowV}`)}</div></div>
        <div class="dock"><div class="strip">${colB.map(s => html`${this.strip(s)}${overflowV}`)}</div></div>
      </div>
      <div class="status"><span>Щелкните левой кнопкой мыши на объекте для его выделения (вместе с Ctrl - добавить к выделенным)</span><i></i></div>
      ${this.renderTaskbar()}`;
  }
}
